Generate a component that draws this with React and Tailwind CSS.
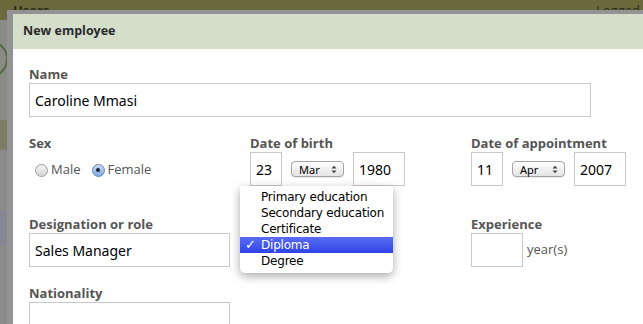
import React from "react";

const label = "text-[13px] leading-[18px] font-bold text-[#555] [font-family:'Open_Sans',sans-serif]";
const inputCls =
  "h-[34px] border border-[#c8c8c8] bg-white px-[5px] flex items-center text-[14px] text-black [font-family:'Noto_Sans',sans-serif]";

function Select({ value }) {
  return (
    <div className="h-[16px] w-[53px] rounded-[4px] border border-[#a3a3a3] bg-gradient-to-b from-white to-[#e4e4e4] flex items-center justify-between pl-[7px] pr-[6px] text-[11px] leading-none text-black [font-family:'Noto_Sans',sans-serif] shadow-[0_1px_0_rgba(0,0,0,0.08)]">
      <span>{value}</span>
      <svg width="6" height="9" viewBox="0 0 6 9">
        <path d="M0.5 3.5 L3 0.8 L5.5 3.5Z M0.5 5.5 L3 8.2 L5.5 5.5Z" fill="#444" />
      </svg>
    </div>
  );
}

function Radio({ checked }) {
  return checked ? (
    <div className="w-[13px] h-[13px] rounded-full border border-[#6f7fae] bg-gradient-to-b from-[#c9dcf6] to-[#7fa9e6] flex items-center justify-center">
      <div className="w-[4px] h-[4px] rounded-full bg-[#1d2433]" />
    </div>
  ) : (
    <div className="w-[13px] h-[13px] rounded-full border border-[#9a9a9a] bg-gradient-to-b from-[#f4f4f4] to-[#d6d6d6]" />
  );
}

export default function App() {
  return (
    <div className="relative w-[643px] h-[324px] overflow-hidden bg-[#8d8d8d]">
      {/* dimmed page behind */}
      <div className="absolute inset-0">
        <div className="h-[20px] bg-[#6a693c] flex justify-between items-start px-[13px] pt-[1px] text-[13px] font-bold text-[#2b2b1a] [font-family:'Open_Sans',sans-serif]">
          <span>Users</span>
          <span className="font-normal text-[#2b2b1a] mr-[-10px]">Logged</span>
        </div>
        <div className="w-[8px] h-[304px] flex flex-col">
          <div className="h-[100px] bg-[#8b8b85] relative overflow-hidden">
            <div className="absolute left-[-30px] top-[20px] w-[38px] h-[38px] rounded-full border-2 border-[#4f6b40]" />
          </div>
          <div className="h-[30px] bg-[#7b7b66]" />
          <div className="h-[60px] bg-[#8b8b8b]" />
          <div className="h-[36px] bg-[#878793]" />
          <div className="h-[78px] bg-[#8b8b8b]" />
        </div>
      </div>

      {/* dialog window */}
      <div className="absolute left-[7px] top-[10px] w-[660px] h-[330px] border-l-[6px] border-t-[4px] border-[#939393] bg-white">
        <div className="h-[35px] bg-[#d5decb] flex items-center pl-[10px] text-[12.5px] font-bold text-[#2a2a2a] [font-family:'Open_Sans',sans-serif]">
          New employee
        </div>
        <div className="pl-[16px] pt-[16px]">
          <div className={label}>Name</div>
          <div className={`${inputCls} w-[562px]`}>Caroline Mmasi</div>

          <div className="grid grid-cols-[221px_221px_221px] mt-[17px]">
            <div>
              <div className={label}>Sex</div>
              <div className="flex items-center h-[34px] pl-[6px] pt-[2px] text-[13px] text-[#555] [font-family:'Open_Sans',sans-serif]">
                <Radio />
                <span className="ml-[3px]">Male</span>
                <span className="ml-[11px]"><Radio checked /></span>
                <span className="ml-[3px]">Female</span>
              </div>
            </div>
            <div>
              <div className={label}>Date of birth</div>
              <div className="flex items-center gap-[9px]">
                <div className={`${inputCls} w-[32px]`}>23</div>
                <Select value="Mar" />
                <div className={`${inputCls} w-[52px]`}>1980</div>
              </div>
            </div>
            <div>
              <div className={label}>Date of appointment</div>
              <div className="flex items-center gap-[9px]">
                <div className={`${inputCls} w-[32px]`}>11</div>
                <Select value="Apr" />
                <div className={`${inputCls} w-[52px]`}>2007</div>
              </div>
            </div>
          </div>

          <div className="grid grid-cols-[221px_221px_221px] mt-[29px]">
            <div>
              <div className={label}>Designation or role</div>
              <div className={`${inputCls} w-[201px]`}>Sales Manager</div>
            </div>
            <div />
            <div>
              <div className={label}>Experience</div>
              <div className="flex items-center">
                <div className={`${inputCls} w-[52px]`}></div>
                <span className="ml-[4px] text-[13px] text-[#555] [font-family:'Open_Sans',sans-serif]">year(s)</span>
              </div>
            </div>
          </div>

          <div className="mt-[17px]">
            <div className={label}>Nationality</div>
            <div className={`${inputCls} w-[201px]`}></div>
          </div>
        </div>
      </div>

      {/* open select menu */}
      <div className="absolute left-[240px] top-[186px] w-[153px] h-[87px] bg-white rounded-b-[5px] rounded-t-[2px] shadow-[0_3px_10px_rgba(0,0,0,0.35)] pt-[3px] text-[12px] text-black [font-family:'DejaVu_Sans',sans-serif] tracking-[-0.2px]">
        {["Primary education", "Secondary education", "Certificate", "Diploma", "Degree"].map((t) => (
          <div
            key={t}
            className={
              t === "Diploma"
                ? "h-[16px] flex items-center bg-gradient-to-b from-[#5a6cf3] to-[#2f42e6] text-white"
                : "h-[16px] flex items-center"
            }
          >
            <span className="w-[21px] pl-[5px] text-[13px] font-bold">{t === "Diploma" ? "✓" : ""}</span>
            <span>{t}</span>
          </div>
        ))}
      </div>
    </div>
  );
}
